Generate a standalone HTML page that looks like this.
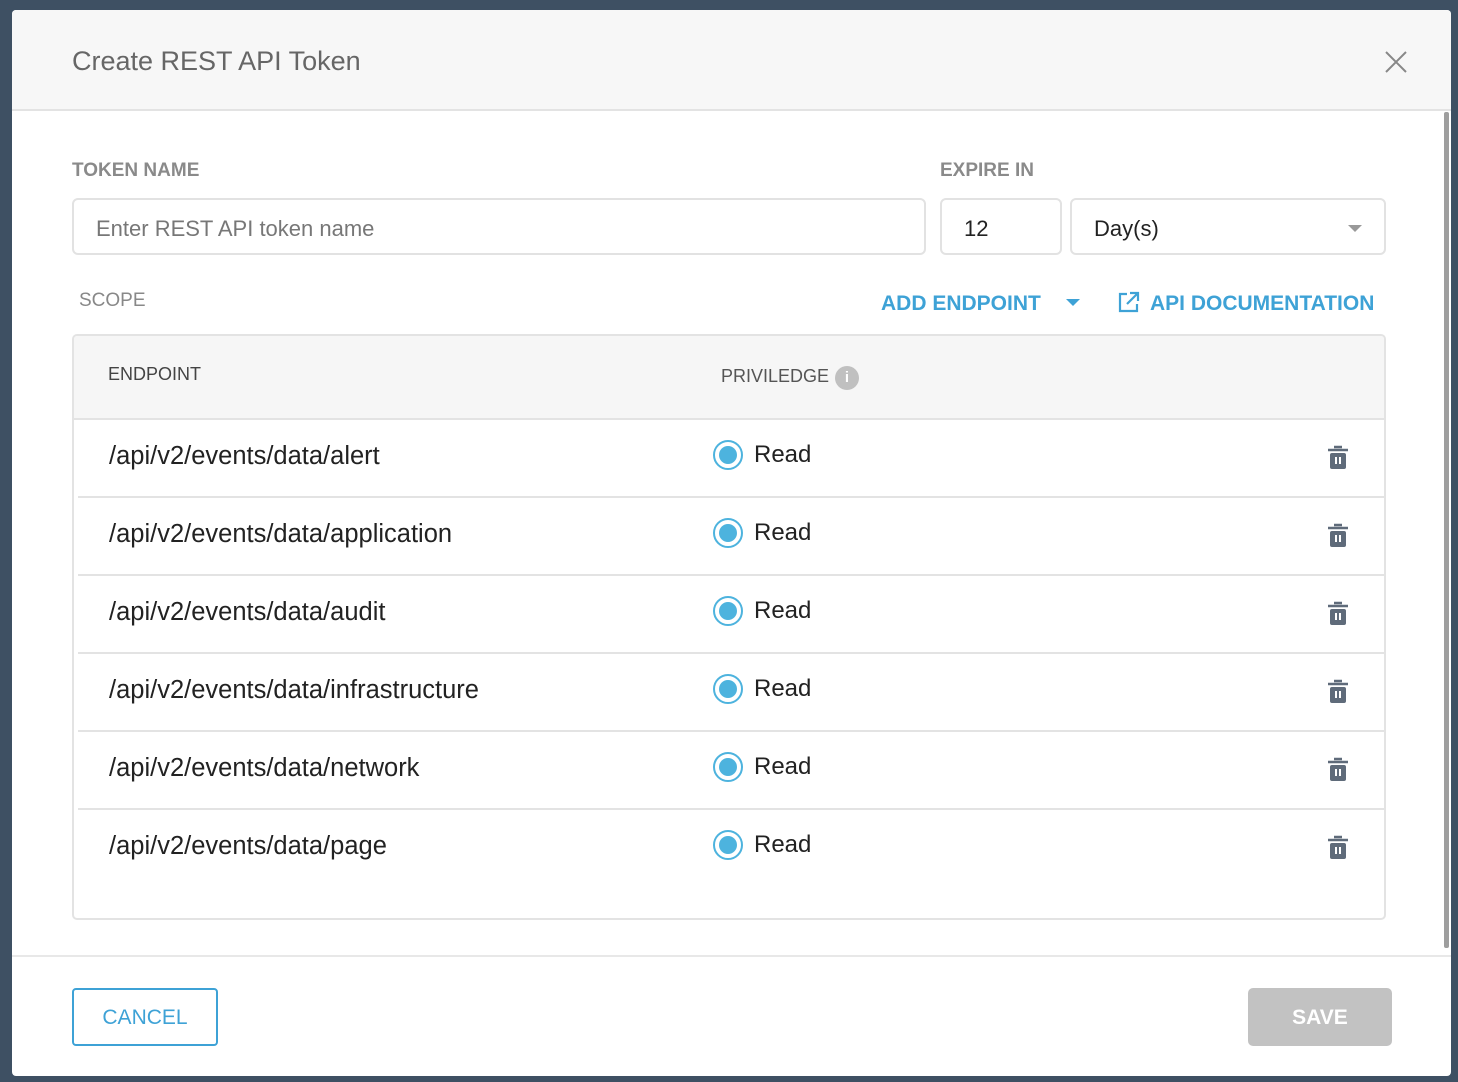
<!DOCTYPE html>
<html><head><style>
*{box-sizing:border-box;margin:0;padding:0}
body{width:1458px;height:1082px;background:#3e5063;font-family:"Liberation Sans",sans-serif;position:relative;overflow:hidden}
.m{position:absolute;left:12px;top:10px;width:1439px;height:1066px;background:#fff;border-radius:4px;overflow:hidden}
.hd{position:absolute;left:0;top:0;width:100%;height:101px;background:#f7f7f7;border-bottom:2px solid #e3e3e3}
.t{position:absolute;left:60px;top:36px;font-size:27px;color:#666}
.a{position:absolute;font-size:20px}
.lbl{color:#8a8a8a;font-weight:bold;font-size:19px}
.inp{position:absolute;border:2px solid #e2e2e2;border-radius:6px;height:57px;top:188px;font-size:22px;padding-left:22px;line-height:57px}
.blue{color:#3ea2d6;font-weight:bold;font-size:21px}
.tbl{position:absolute;left:60px;top:324px;width:1314px;height:586px;border:2px solid #e3e3e3;border-radius:5px;overflow:hidden}
.th{height:84px;background:#f6f6f6;border-bottom:2px solid #e3e3e3;position:relative}
.row{position:absolute;left:4px;right:0;height:78px;border-bottom:2px solid #e3e3e3}
.ep{position:absolute;left:31px;top:22px;font-size:25.5px;color:#222}
.rd{position:absolute;left:635px;top:20px;width:30px;height:30px;border:2px solid #4db3de;border-radius:50%}
.rd:after{content:"";position:absolute;left:4px;top:4px;width:18px;height:18px;border-radius:50%;background:#4db3de}
.rt{position:absolute;left:676px;top:21px;font-size:24px;color:#222}
.tr{position:absolute;left:1249px;top:25px}
</style></head><body>
<div class="m">
<div class="hd"><div class="t">Create REST API Token</div>
<svg style="position:absolute;left:1373px;top:41px" width="22" height="22"><path d="M1 1L21 21M21 1L1 21" stroke="#888" stroke-width="2"/></svg></div>
<div style="position:absolute;left:1432px;top:102px;width:5px;height:836px;background:#9e9e9e;border-radius:2px"></div>
<div class="a lbl" style="left:60px;top:150px">TOKEN NAME</div>
<div class="a lbl" style="left:928px;top:150px">EXPIRE IN</div>
<div class="inp" style="left:60px;width:854px;color:#777">Enter REST API token name</div>
<div class="inp" style="left:928px;width:122px;color:#222">12</div>
<div class="inp" style="left:1058px;width:316px;color:#222">Day(s)<span style="position:absolute;right:22px;top:25px;border-left:7px solid transparent;border-right:7px solid transparent;border-top:7px solid #999"></span></div>
<div class="a lbl" style="left:67px;top:280px;font-weight:normal;color:#888">SCOPE</div>
<div class="a blue" style="left:869px;top:282px">ADD ENDPOINT</div>
<span style="position:absolute;left:1054px;top:289px;border-left:7px solid transparent;border-right:7px solid transparent;border-top:7px solid #3ea2d6"></span>
<svg style="position:absolute;left:1106px;top:281px" width="22" height="22" fill="none" stroke="#3ea2d6" stroke-width="2.2"><path d="M9 3H2V20H19V13M12 2H20V10M20 2L9 13"/></svg>
<div class="a blue" style="left:1138px;top:282px">API DOCUMENTATION</div>
<div class="tbl">
<div class="th"><div class="a" style="left:34px;top:28px;font-size:18px;color:#444">ENDPOINT</div>
<div class="a" style="left:647px;top:30px;font-size:18px;color:#555">PRIVILEDGE</div>
<div style="position:absolute;left:761px;top:30px;width:24px;height:24px;border-radius:50%;background:#c0c0c0;color:#fff;font-size:15px;font-weight:bold;text-align:center;line-height:24px">i</div></div>
<div class="row" style="top:84px"><div class="ep">/api/v2/events/data/alert</div><div class="rd"></div><div class="rt">Read</div><svg class="tr" width="22" height="26"><path d="M7 2h8M1 5h20" stroke="#5f6b7a" stroke-width="2.4"/><rect x="3" y="8" width="16" height="16" rx="2" fill="#5f6b7a"/><rect x="8" y="12" width="2" height="7" fill="#fff"/><rect x="12" y="12" width="2" height="7" fill="#fff"/></svg></div>
<div class="row" style="top:162px"><div class="ep">/api/v2/events/data/application</div><div class="rd"></div><div class="rt">Read</div><svg class="tr" width="22" height="26"><path d="M7 2h8M1 5h20" stroke="#5f6b7a" stroke-width="2.4"/><rect x="3" y="8" width="16" height="16" rx="2" fill="#5f6b7a"/><rect x="8" y="12" width="2" height="7" fill="#fff"/><rect x="12" y="12" width="2" height="7" fill="#fff"/></svg></div>
<div class="row" style="top:240px"><div class="ep">/api/v2/events/data/audit</div><div class="rd"></div><div class="rt">Read</div><svg class="tr" width="22" height="26"><path d="M7 2h8M1 5h20" stroke="#5f6b7a" stroke-width="2.4"/><rect x="3" y="8" width="16" height="16" rx="2" fill="#5f6b7a"/><rect x="8" y="12" width="2" height="7" fill="#fff"/><rect x="12" y="12" width="2" height="7" fill="#fff"/></svg></div>
<div class="row" style="top:318px"><div class="ep">/api/v2/events/data/infrastructure</div><div class="rd"></div><div class="rt">Read</div><svg class="tr" width="22" height="26"><path d="M7 2h8M1 5h20" stroke="#5f6b7a" stroke-width="2.4"/><rect x="3" y="8" width="16" height="16" rx="2" fill="#5f6b7a"/><rect x="8" y="12" width="2" height="7" fill="#fff"/><rect x="12" y="12" width="2" height="7" fill="#fff"/></svg></div>
<div class="row" style="top:396px"><div class="ep">/api/v2/events/data/network</div><div class="rd"></div><div class="rt">Read</div><svg class="tr" width="22" height="26"><path d="M7 2h8M1 5h20" stroke="#5f6b7a" stroke-width="2.4"/><rect x="3" y="8" width="16" height="16" rx="2" fill="#5f6b7a"/><rect x="8" y="12" width="2" height="7" fill="#fff"/><rect x="12" y="12" width="2" height="7" fill="#fff"/></svg></div>
<div class="row" style="top:474px;border-bottom:none"><div class="ep">/api/v2/events/data/page</div><div class="rd"></div><div class="rt">Read</div><svg class="tr" width="22" height="26"><path d="M7 2h8M1 5h20" stroke="#5f6b7a" stroke-width="2.4"/><rect x="3" y="8" width="16" height="16" rx="2" fill="#5f6b7a"/><rect x="8" y="12" width="2" height="7" fill="#fff"/><rect x="12" y="12" width="2" height="7" fill="#fff"/></svg></div>
</div>
<div style="position:absolute;left:0;top:945px;width:100%;height:2px;background:#e8e8e8"></div>
<div style="position:absolute;left:60px;top:978px;width:146px;height:58px;border:2px solid #3ea2d6;border-radius:4px;color:#3ea2d6;font-size:21px;text-align:center;line-height:56px">CANCEL</div>
<div style="position:absolute;left:1236px;top:978px;width:144px;height:58px;background:#c2c2c2;border-radius:5px;color:#fff;font-weight:bold;font-size:21px;text-align:center;line-height:60px">SAVE</div>
</div>
</body></html>
